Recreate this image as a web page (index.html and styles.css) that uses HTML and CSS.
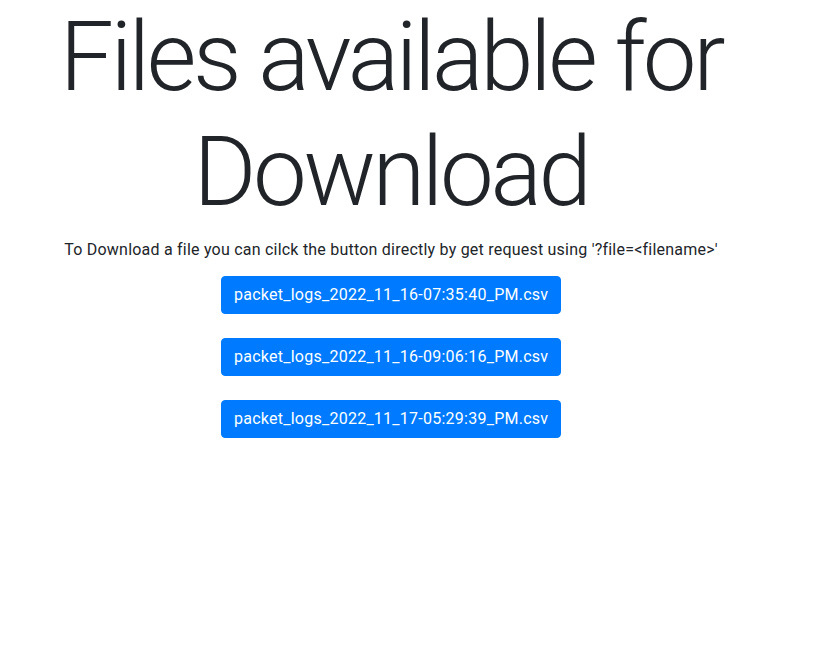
FILE: index.html
```html
<!DOCTYPE html>
<html>
<head>
<meta charset="utf-8">
<link rel="stylesheet" href="styles.css">
</head>
<body>
<div class="page">
  <h1 class="title">Files available for Download</h1>
  <p class="intro">To Download a file you can cilck the button directly by get request using '?file=&lt;filename&gt;'</p>
  <div class="files">
    <a class="btn" href="?file=packet_logs_2022_11_16-07:35:40_PM.csv">packet_logs_2022_11_16-07:35:40_PM.csv</a>
    <a class="btn" href="?file=packet_logs_2022_11_16-09:06:16_PM.csv">packet_logs_2022_11_16-09:06:16_PM.csv</a>
    <a class="btn" href="?file=packet_logs_2022_11_17-05:29:39_PM.csv">packet_logs_2022_11_17-05:29:39_PM.csv</a>
  </div>
</div>
</body>
</html>
```
FILE: styles.css
```css
html, body {
  margin: 0;
  padding: 0;
  background: #fff;
}
body {
  font-family: Roboto, "Liberation Sans", sans-serif;
  font-size: 16px;
  line-height: 1.5;
  color: #212529;
  letter-spacing: 0.22px;
}
.page {
  width: 782px;
  text-align: center;
}
.title {
  margin: 0 0 8px;
  font-size: 96px;
  font-weight: 300;
  line-height: 1.2;
  letter-spacing: -3.4px;
}
.intro {
  margin: 0 0 14px;
  white-space: nowrap;
}
.files {
  display: flex;
  flex-direction: column;
  align-items: center;
  gap: 24px;
}
.btn {
  display: block;
  box-sizing: border-box;
  width: 340px;
  padding: 6px 12px;
  border: 1px solid #007bff;
  border-radius: 4px;
  background: #007bff;
  color: #fff;
  text-decoration: none;
  font-size: 16px;
  line-height: 24px;
  letter-spacing: 0.25px;
  white-space: nowrap;
}
```
